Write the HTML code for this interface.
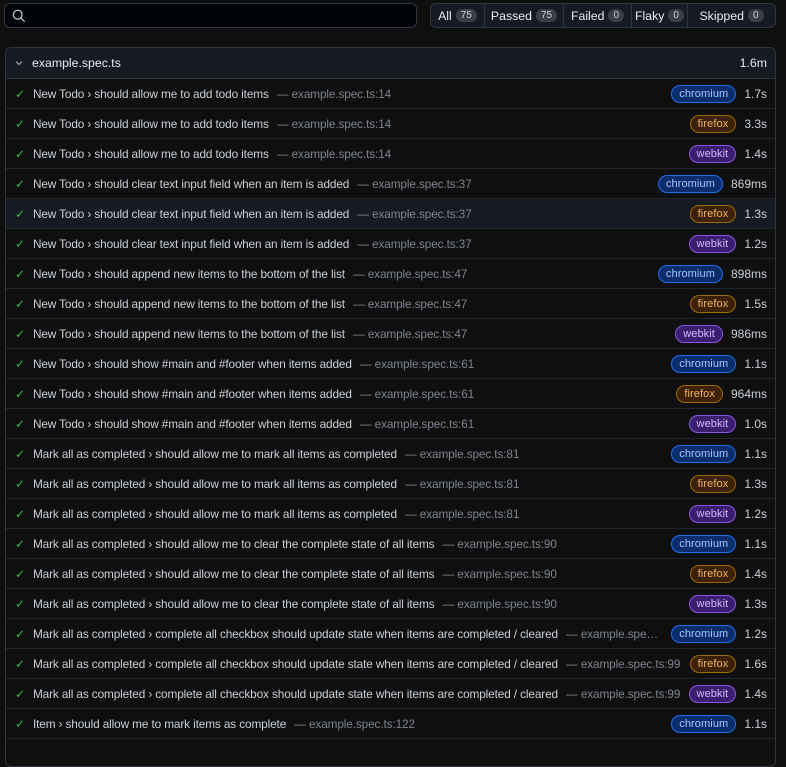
<!DOCTYPE html>
<html><head><meta charset="utf-8"><style>
*{box-sizing:border-box;margin:0;padding:0}
body{width:786px;height:744px;background:#0f0f10;font-family:"Liberation Sans",sans-serif;color:#c9d1d9;overflow:hidden;position:relative}
.search{position:absolute;left:4px;top:3px;width:413px;height:25px;border:1px solid #30363d;border-radius:6px;background:#010409}
.search svg{position:absolute;left:7px;top:5px}
.filters{position:absolute;left:430px;top:3px;height:25px;width:346px;border:1px solid #30363d;border-radius:6px;background:#161b22;display:flex;font-size:12.3px;color:#e6edf3}
.filters div{display:flex;align-items:center;justify-content:center;border-right:1px solid #30363d;height:100%}
.filters div:last-child{border-right:none}
.cnt{background:#3a3f46;border-radius:9px;font-size:10px;padding:1px 5px;margin-left:4px;color:#c9d1d9}
.box{position:absolute;left:5px;top:47px;width:771px;height:720px;border:1px solid #30363d;border-radius:6px;overflow:hidden;background:#0f0f10}
.hdr{height:31px;background:#161b22;border-bottom:1px solid #30363d;display:flex;align-items:center;font-size:12.3px;color:#e6edf3;padding:0 8px}
.hdr .t{flex:1;margin-left:8px}
.row{height:30px;border-bottom:1px solid #21262d;display:flex;align-items:center;font-size:11.8px;padding:0 8px 0 9px;letter-spacing:-0.12px}
.row.hl{background:#161b22}
.ck{color:#3fb950;margin-right:8px;font-size:12px}
.nm{color:#c9d1d9;white-space:nowrap}
.loc{color:#7d8590;margin-left:8px;white-space:nowrap;overflow:hidden;text-overflow:ellipsis;flex:1;min-width:0}
.b{border-radius:10px;font-size:11px;padding:2px 7px;border:1px solid;margin-left:8px;white-space:nowrap;letter-spacing:0.1px}
.chromium{background:#0c2d6b;border-color:#1f6feb;color:#a5c8ff}
.firefox{background:#3d2106;border-color:#9e6a03;color:#f0b46a}
.webkit{background:#3c1e70;border-color:#8957e5;color:#d2b8ff}
.d{margin-left:8px;text-align:right;color:#c9d1d9;white-space:nowrap;font-size:12px;letter-spacing:0}
</style></head><body>
<div class="search"><svg width="14" height="14" viewBox="0 0 16 16"><circle cx="6.5" cy="6.5" r="5" fill="none" stroke="#c9d1d9" stroke-width="1.4"/><path d="M10.3 10.3L14.5 14.5" stroke="#c9d1d9" stroke-width="1.4"/></svg></div>
<div class="filters"><div style="width:54px">All<span class="cnt">75</span></div><div style="width:79px">Passed<span class="cnt">75</span></div><div style="width:68px">Failed<span class="cnt">0</span></div><div style="width:56px">Flaky<span class="cnt">0</span></div><div style="flex:1">Skipped<span class="cnt">0</span></div></div>
<div class="box">
<div class="hdr"><svg width="10" height="10" viewBox="0 0 10 10"><path d="M2 3.5L5 6.5L8 3.5" fill="none" stroke="#8b949e" stroke-width="1.3"/></svg><span class="t">example.spec.ts</span><span>1.6m</span></div>
<div class="row"><span class="ck">✓</span><span class="nm">New Todo › should allow me to add todo items</span><span class="loc">— example.spec.ts:14</span><span class="b chromium">chromium</span><span class="d">1.7s</span></div>
<div class="row"><span class="ck">✓</span><span class="nm">New Todo › should allow me to add todo items</span><span class="loc">— example.spec.ts:14</span><span class="b firefox">firefox</span><span class="d">3.3s</span></div>
<div class="row"><span class="ck">✓</span><span class="nm">New Todo › should allow me to add todo items</span><span class="loc">— example.spec.ts:14</span><span class="b webkit">webkit</span><span class="d">1.4s</span></div>
<div class="row"><span class="ck">✓</span><span class="nm">New Todo › should clear text input field when an item is added</span><span class="loc">— example.spec.ts:37</span><span class="b chromium">chromium</span><span class="d">869ms</span></div>
<div class="row hl"><span class="ck">✓</span><span class="nm">New Todo › should clear text input field when an item is added</span><span class="loc">— example.spec.ts:37</span><span class="b firefox">firefox</span><span class="d">1.3s</span></div>
<div class="row"><span class="ck">✓</span><span class="nm">New Todo › should clear text input field when an item is added</span><span class="loc">— example.spec.ts:37</span><span class="b webkit">webkit</span><span class="d">1.2s</span></div>
<div class="row"><span class="ck">✓</span><span class="nm">New Todo › should append new items to the bottom of the list</span><span class="loc">— example.spec.ts:47</span><span class="b chromium">chromium</span><span class="d">898ms</span></div>
<div class="row"><span class="ck">✓</span><span class="nm">New Todo › should append new items to the bottom of the list</span><span class="loc">— example.spec.ts:47</span><span class="b firefox">firefox</span><span class="d">1.5s</span></div>
<div class="row"><span class="ck">✓</span><span class="nm">New Todo › should append new items to the bottom of the list</span><span class="loc">— example.spec.ts:47</span><span class="b webkit">webkit</span><span class="d">986ms</span></div>
<div class="row"><span class="ck">✓</span><span class="nm">New Todo › should show #main and #footer when items added</span><span class="loc">— example.spec.ts:61</span><span class="b chromium">chromium</span><span class="d">1.1s</span></div>
<div class="row"><span class="ck">✓</span><span class="nm">New Todo › should show #main and #footer when items added</span><span class="loc">— example.spec.ts:61</span><span class="b firefox">firefox</span><span class="d">964ms</span></div>
<div class="row"><span class="ck">✓</span><span class="nm">New Todo › should show #main and #footer when items added</span><span class="loc">— example.spec.ts:61</span><span class="b webkit">webkit</span><span class="d">1.0s</span></div>
<div class="row"><span class="ck">✓</span><span class="nm">Mark all as completed › should allow me to mark all items as completed</span><span class="loc">— example.spec.ts:81</span><span class="b chromium">chromium</span><span class="d">1.1s</span></div>
<div class="row"><span class="ck">✓</span><span class="nm">Mark all as completed › should allow me to mark all items as completed</span><span class="loc">— example.spec.ts:81</span><span class="b firefox">firefox</span><span class="d">1.3s</span></div>
<div class="row"><span class="ck">✓</span><span class="nm">Mark all as completed › should allow me to mark all items as completed</span><span class="loc">— example.spec.ts:81</span><span class="b webkit">webkit</span><span class="d">1.2s</span></div>
<div class="row"><span class="ck">✓</span><span class="nm">Mark all as completed › should allow me to clear the complete state of all items</span><span class="loc">— example.spec.ts:90</span><span class="b chromium">chromium</span><span class="d">1.1s</span></div>
<div class="row"><span class="ck">✓</span><span class="nm">Mark all as completed › should allow me to clear the complete state of all items</span><span class="loc">— example.spec.ts:90</span><span class="b firefox">firefox</span><span class="d">1.4s</span></div>
<div class="row"><span class="ck">✓</span><span class="nm">Mark all as completed › should allow me to clear the complete state of all items</span><span class="loc">— example.spec.ts:90</span><span class="b webkit">webkit</span><span class="d">1.3s</span></div>
<div class="row"><span class="ck">✓</span><span class="nm">Mark all as completed › complete all checkbox should update state when items are completed / cleared</span><span class="loc">— example.spec.ts:99</span><span class="b chromium">chromium</span><span class="d">1.2s</span></div>
<div class="row"><span class="ck">✓</span><span class="nm">Mark all as completed › complete all checkbox should update state when items are completed / cleared</span><span class="loc">— example.spec.ts:99</span><span class="b firefox">firefox</span><span class="d">1.6s</span></div>
<div class="row"><span class="ck">✓</span><span class="nm">Mark all as completed › complete all checkbox should update state when items are completed / cleared</span><span class="loc">— example.spec.ts:99</span><span class="b webkit">webkit</span><span class="d">1.4s</span></div>
<div class="row"><span class="ck">✓</span><span class="nm">Item › should allow me to mark items as complete</span><span class="loc">— example.spec.ts:122</span><span class="b chromium">chromium</span><span class="d">1.1s</span></div>
<div class="row"></div>
</div>
</body></html>
